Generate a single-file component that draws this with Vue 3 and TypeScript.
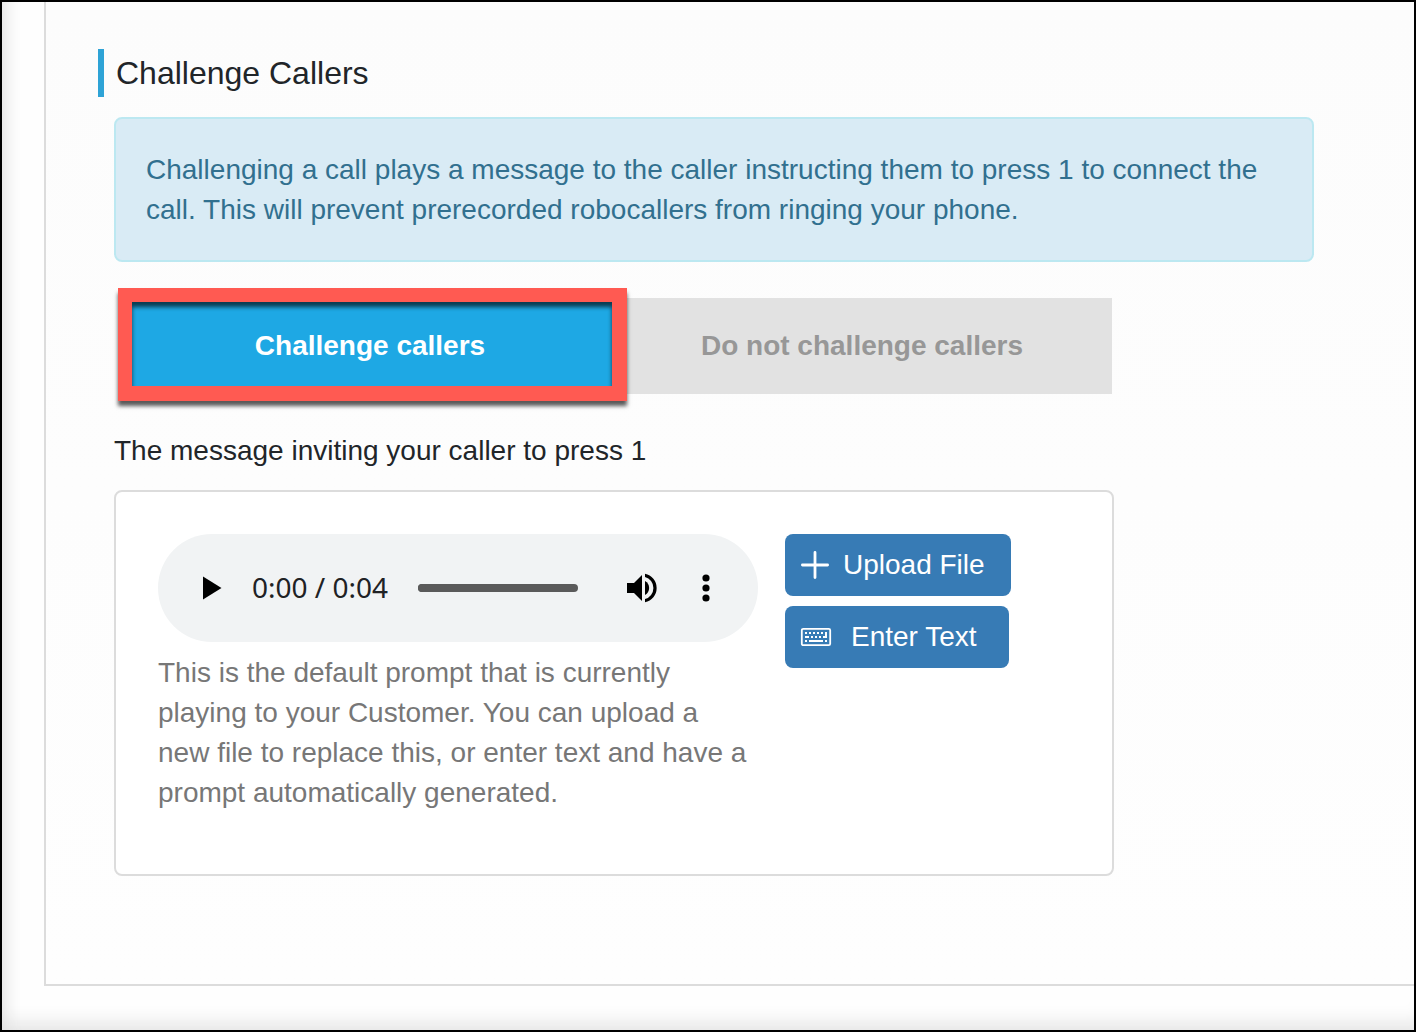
<script setup lang="ts">
import { ref } from 'vue'

type Mode = 'challenge' | 'none'

const options: { value: Mode; label: string }[] = [
  { value: 'challenge', label: 'Challenge callers' },
  { value: 'none', label: 'Do not challenge callers' },
]
const mode = ref<Mode>('challenge')
const position = ref(0)
</script>

<template>
  <main class="page">
    <section class="panel">
      <h1 class="title">Challenge Callers</h1>
      <div class="content">
        <p class="info">
          Challenging a call plays a message to the caller instructing them to press 1 to connect the
          call. This will prevent prerecorded robocallers from ringing your phone.
        </p>

        <div class="switch" role="radiogroup" aria-label="Challenge Callers">
          <label v-for="o in options" :key="o.value" class="option" :class="{ active: mode === o.value }">
            <input v-model="mode" class="radio" type="radio" name="mode" :value="o.value" />
            {{ o.label }}
          </label>
          <span class="highlight" aria-hidden="true"></span>
        </div>

        <h2 class="subtitle">The message inviting your caller to press 1</h2>

        <div class="card">
          <div class="prompt">
            <div class="player">
              <button class="icon-button" type="button" aria-label="Play">
                <svg width="20" height="24" viewBox="0 0 20 24"><path d="M1 0.5v23L19.500 12z" /></svg>
              </button>
              <span class="time">0:00 / 0:04</span>
              <input v-model="position" class="track" type="range" min="0" max="4" aria-label="Position" />
              <button class="icon-button volume" type="button" aria-label="Mute">
                <svg width="32" height="30" viewBox="0 0 32 30">
                  <path d="M1 10h7l8-8v26l-8-8H1z" />
                  <path d="M19 8a8 8 0 0 1 0 14z" />
                  <path d="M19 0.700a14.600 14.600 0 0 1 0 28.600v-3.300a11.400 11.400 0 0 0 0-22z" />
                </svg>
              </button>
              <button class="icon-button more" type="button" aria-label="More options">
                <svg width="8" height="28" viewBox="0 0 8 28">
                  <circle cx="4" cy="4" r="3.600" /><circle cx="4" cy="14" r="3.600" /><circle cx="4" cy="24" r="3.600" />
                </svg>
              </button>
            </div>
            <p class="hint">
              This is the default prompt that is currently playing to your Customer. You can upload a
              new file to replace this, or enter text and have a prompt automatically generated.
            </p>
          </div>
          <div class="actions">
            <button class="action" type="button">
              <svg width="30" height="30" viewBox="0 0 30 30" fill="none" stroke="currentColor" stroke-width="2.800" stroke-linecap="round">
                <path d="M15 2.400v25.200M2.400 15h25.200" />
              </svg>
              <span>Upload File</span>
            </button>
            <button class="action enter" type="button">
              <svg width="32" height="20" viewBox="0 0 32 20" fill="none" stroke="currentColor">
                <rect x="1.800" y="1.800" width="28.400" height="16.400" rx="1.500" stroke-width="1.800" />
                <path d="M5 6h2M9 6h2M13 6h2M17 6h2M21 6h2M5 10h4M11 10h2M15 10h2M19 10h2M23 10h4M5 14h2M9 14h14M25 14h2" stroke-width="2" />
                <path d="M26 5v6" stroke-width="2" />
              </svg>
              <span>Enter Text</span>
            </button>
          </div>
        </div>
      </div>
    </section>
  </main>
</template>

<style>
body {
  margin: 0;
}
</style>

<style scoped>
.page {
  box-sizing: border-box;
  min-height: 100vh;
  padding: 0 0 44px 42px;
  border: 2px solid #000;
  background: #fefefe;
  box-shadow: inset 20px 0 18px -18px #dcdcdc, inset 0 -20px 20px -14px #e2e2e2;
  font-family: "Liberation Sans", Arial, sans-serif;
  font-size: 28px;
  line-height: 40px;
  color: #212529;
}

.panel {
  box-sizing: border-box;
  padding: 47px 100px 108px 52px;
  border: solid #dcdcdc;
  border-width: 0 0 2px 2px;
  background: linear-gradient(#fcfcfc, #fefefe);
}

.title {
  margin: 0;
  padding-left: 12px;
  border-left: 6px solid #2ea3d6;
  font-size: 32px;
  font-weight: 400;
  line-height: 48px;
}

.content {
  padding: 20px 0 0 16px;
}

.info {
  margin: 0;
  padding: 31px 30px 30px;
  border: 2px solid #bce8f1;
  border-radius: 8px;
  background: #d9ebf5;
  color: #31708f;
}

.switch {
  position: relative;
  display: flex;
  max-width: 992px;
  margin: 36px 0 0 6px;
}

.option {
  display: flex;
  flex: 1;
  align-items: center;
  justify-content: center;
  height: 96px;
  background: #e2e2e2;
  color: #979797;
  font-weight: 700;
}

.option + .option {
  margin-left: -8px;
}

.option.active {
  background: #1ea8e4;
  color: #fff;
}

.radio {
  position: absolute;
  opacity: 0;
}

.highlight {
  position: absolute;
  top: -10px;
  left: -2px;
  box-sizing: border-box;
  width: 509px;
  height: 113px;
  border: 15px solid #ff5a52;
  border-width: 14px 15px 15px 14px;
  box-shadow: 0 5px 4px rgba(0, 0, 0, 0.65), inset 0 5px 4px rgba(0, 0, 0, 0.65);
  pointer-events: none;
}

.subtitle {
  margin: 37px 0 19px;
  font-size: 28px;
  font-weight: 400;
}

.card {
  box-sizing: border-box;
  display: flex;
  align-items: flex-start;
  gap: 27px;
  max-width: 1000px;
  min-height: 386px;
  padding: 42px;
  border: 2px solid #dcdcdc;
  border-radius: 8px;
  background: #fff;
}

.prompt {
  width: 600px;
}

.player {
  box-sizing: border-box;
  display: flex;
  align-items: center;
  height: 108px;
  padding: 0 48px 0 44px;
  border-radius: 54px;
  background: #f1f3f4;
}

.icon-button {
  display: flex;
  padding: 0;
  border: 0;
  background: none;
  color: #000;
}

.time {
  margin: 0 30px;
  padding-bottom: 2px;
  font-family: "Noto Sans", sans-serif;
  font-size: 28px;
  color: #202124;
  white-space: nowrap;
}

.track {
  flex: 1;
  min-width: 0;
  height: 8px;
  margin: 0;
  border-radius: 4px;
  background: #5a5a5a;
  appearance: none;
}

.track::-webkit-slider-thumb {
  width: 8px;
  height: 8px;
  border-radius: 4px;
  background: #5a5a5a;
  appearance: none;
}

.volume {
  margin: 0 44px 0 48px;
}

.hint {
  margin: 11px 0 0;
  padding-right: 4px;
  color: #777;
}

.actions {
  display: flex;
  flex-direction: column;
  align-items: flex-start;
  gap: 10px;
}

.action {
  display: flex;
  align-items: center;
  gap: 13px;
  height: 62px;
  padding: 0 26px 0 15px;
  border: 0;
  border-radius: 8px;
  background: #377bb5;
  color: #fff;
  font: inherit;
  white-space: nowrap;
}

.enter {
  gap: 19px;
  padding-right: 32px;
}
</style>
